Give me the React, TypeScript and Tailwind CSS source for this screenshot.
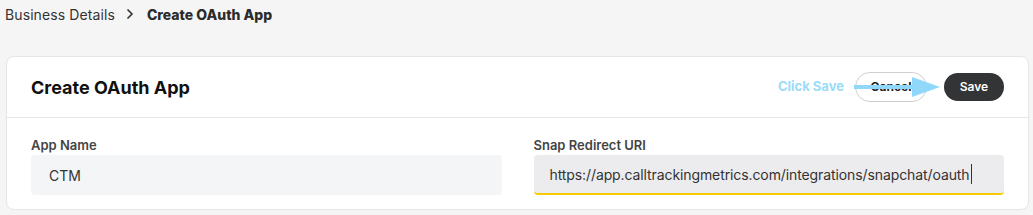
import React from 'react';

const font = { fontFamily: 'Inter, "Noto Sans", sans-serif' };

export default function App() {
  return (
    <div className="w-[1033px] h-[215px] bg-[#f5f5f5] overflow-hidden" style={font}>
      <nav className="flex items-center h-[28px] pl-[5px] text-[14px] text-[#333]">
        <span className="tracking-[0.1px]">Business Details</span>
        <svg width="8" height="12" viewBox="0 0 8 12" className="ml-[11px] mr-[13px]">
          <path d="M1.5 1.5 L6 6 L1.5 10.5" fill="none" stroke="#333" strokeWidth="1.6" />
        </svg>
        <span className="font-extrabold text-[#2b2b2b]">Create OAuth App</span>
      </nav>

      <section className="ml-[6px] mt-[28px] w-[1023px] bg-white rounded-[8px] border border-[#e6e6e6]">
        <header className="flex items-center justify-between h-[61px] pl-[24px] pr-[24px] border-b border-[#e5e5e5]">
          <h2 className="text-[18px] font-bold text-[#111]">Create OAuth App</h2>
          <div className="relative flex items-center gap-[17px]">
            <span className="absolute right-[160px] top-1/2 -translate-y-1/2 text-[13px] font-bold text-[#9bdcf9] whitespace-nowrap">
              Click Save
            </span>
            <button className="w-[72px] h-[30px] rounded-full border border-[#cfcfcf] bg-white text-[12px] font-bold text-[#222]">
              Cancel
            </button>
            <button className="w-[60px] h-[28px] rounded-full bg-[#323436] text-[12px] font-semibold text-white">
              Save
            </button>
            <svg
              width="88"
              height="24"
              viewBox="0 0 88 24"
              className="absolute left-[-1px] top-1/2 -translate-y-1/2 pointer-events-none"
            >
              <rect x="0" y="10" width="62" height="4" fill="#8fd8f9" />
              <path d="M58 2 L86 12 L58 22 Z" fill="#8fd8f9" />
            </svg>
          </div>
        </header>

        <div className="grid grid-cols-2 gap-[32px] pl-[24px] pr-[24px] pt-[19px] pb-[14px]">
          <label className="flex flex-col gap-[2px]">
            <span className="text-[13px] font-semibold text-[#444] leading-[16px]">App Name</span>
            <div className="h-[40px] rounded-[4px] bg-[#f4f5f7] flex items-center px-[18px] text-[14px] text-[#333]">
              CTM
            </div>
          </label>
          <label className="flex flex-col gap-[2px]">
            <span className="text-[13px] font-semibold text-[#444] leading-[16px]">Snap Redirect URI</span>
            <div className="h-[40px] rounded-[4px] bg-[#ececee] border-b-[2px] border-[#f6cb00] flex items-center px-[16px] text-[14px] tracking-[-0.1px] text-[#333]">
              <span>https://app.calltrackingmetrics.com/integrations/snapchat/oauth</span>
              <span className="w-px h-[20px] bg-[#333] ml-[1px]" />
            </div>
          </label>
        </div>
      </section>
    </div>
  );
}
